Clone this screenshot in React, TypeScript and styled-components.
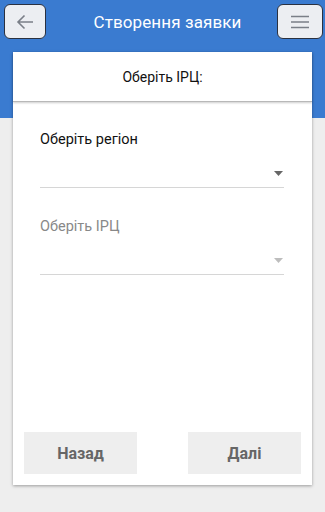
import React from 'react'
import styled, { createGlobalStyle } from 'styled-components'

const GlobalStyle = createGlobalStyle`
  html, body {
    margin: 0;
    padding: 0;
    background: #eeeeee;
    font-family: Roboto, "Noto Sans", "Liberation Sans", sans-serif;
  }
`

const Page = styled.div`
  width: 325px;
  height: 512px;
  background: linear-gradient(180deg, #3a7bd0 0, #3a7bd0 118px, #eeeeee 118px);
  display: flex;
  flex-direction: column;
  box-sizing: border-box;
  padding-top: 4px;
`

const TopBar = styled.div`
  height: 35px;
  padding: 0 2px 0 4px;
  display: flex;
  align-items: center;
  justify-content: space-between;
`

const IconButton = styled.button`
  width: 42px;
  height: 35px;
  box-sizing: border-box;
  border: 1px solid #2a3140;
  border-radius: 6px;
  background: #eceef2;
  display: flex;
  align-items: center;
  justify-content: center;
  padding: 0;
`

const MenuButton = styled(IconButton)`
  width: 46px;
`

const Title = styled.h1`
  margin: 0 0 0 12px;
  color: #ffffff;
  font-size: 17px;
  font-weight: 400;
  letter-spacing: 0.1px;
`

const Card = styled.div`
  margin: 13px 13px 0;
  height: 433px;
  background: #ffffff;
  box-shadow: 0 1px 3px rgba(0, 0, 0, 0.35);
  display: flex;
  flex-direction: column;
`

const CardHeader = styled.div`
  height: 49px;
  display: flex;
  align-items: center;
  justify-content: center;
  font-size: 14px;
  color: #111;
  border-bottom: 1px solid #b8b8b8;
  box-shadow: 0 1px 2px rgba(0, 0, 0, 0.2);
`

const Form = styled.div`
  padding: 29px 28px 0 27px;
  display: flex;
  flex-direction: column;
  gap: 30px;
`

const Field = styled.div`
  display: flex;
  flex-direction: column;
`

const Label = styled.div<{ $disabled?: boolean }>`
  font-size: 14.5px;
  line-height: 17px;
  color: ${(p) => (p.$disabled ? '#888888' : '#111111')};
`

const Select = styled.div<{ $disabled?: boolean }>`
  height: 38px;
  margin-top: 2px;
  border-bottom: 1px solid #d6d6d6;
  display: flex;
  align-items: center;
  justify-content: flex-end;
  padding-right: 1px;
  padding-top: 10px;
  box-sizing: border-box;
  color: ${(p) => (p.$disabled ? '#bdbdbd' : '#666666')};
`

const Actions = styled.div`
  margin-top: auto;
  padding: 0 11px 11px;
  display: flex;
  justify-content: space-between;
`

const ActionButton = styled.button`
  width: 113px;
  height: 42px;
  border: none;
  background: #eeeeee;
  color: #666666;
  font-family: Roboto, "Noto Sans", "Liberation Sans", sans-serif;
  font-size: 16px;
  font-weight: 700;
  padding: 0;
`

const Caret = () => (
  <svg width="9" height="5" viewBox="0 0 9 5">
    <path d="M0 0h9L4.5 5z" fill="currentColor" />
  </svg>
)

const App: React.FC = () => {
  return (
    <>
      <GlobalStyle />
      <Page>
        <TopBar>
          <IconButton aria-label="back">
            <svg width="18" height="16" viewBox="0 0 18 16">
              <path d="M17 8H2M8.5 1.5L2 8l6.5 6.5" fill="none" stroke="#7a7f88" strokeWidth="1.6" />
            </svg>
          </IconButton>
          <Title>Створення заявки</Title>
          <MenuButton aria-label="menu">
            <svg width="20" height="14" viewBox="0 0 20 14">
              <path d="M1 1.5h18M1 7h18M1 12.5h18" stroke="#7a7f88" strokeWidth="1.6" />
            </svg>
          </MenuButton>
        </TopBar>

        <Card>
          <CardHeader>Оберіть ІРЦ:</CardHeader>
          <Form>
            <Field>
              <Label>Оберіть регіон</Label>
              <Select>
                <Caret />
              </Select>
            </Field>
            <Field>
              <Label $disabled>Оберіть ІРЦ</Label>
              <Select $disabled>
                <Caret />
              </Select>
            </Field>
          </Form>
          <Actions>
            <ActionButton>Назад</ActionButton>
            <ActionButton>Далі</ActionButton>
          </Actions>
        </Card>
      </Page>
    </>
  )
}

export default App
